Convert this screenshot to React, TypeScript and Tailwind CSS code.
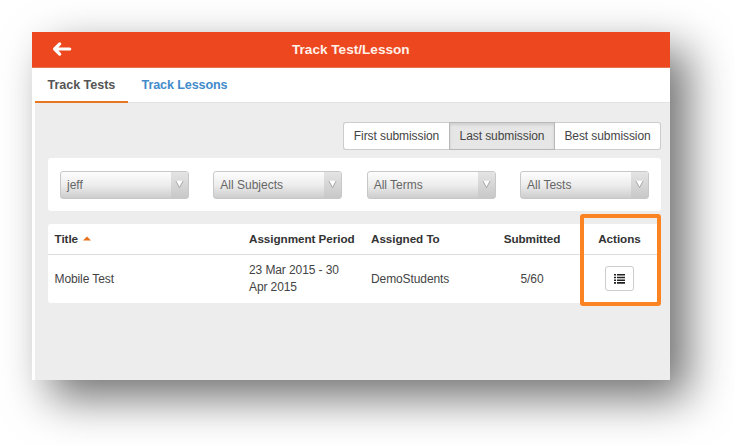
import React from 'react';

function Select({ label }: { label: string }) {
  return (
    <button className="flex h-[28px] w-[129px] overflow-hidden rounded-[3px] border border-[#c8c8c8] bg-gradient-to-b from-[#fdfdfd] via-[#ededed] to-[#cdcdcd] text-left text-[12px] text-[#666]">
      <span className="flex-1 pl-[6px] pt-[4px] leading-[18px]">{label}</span>
      <span className="flex h-full w-[17px] justify-center bg-gradient-to-b from-[#e4e4e4] to-[#c8c8c8] pt-[8px]">
        <svg width="9" height="9" viewBox="0 0 9 9">
          <path d="M1 .8H8L4.5 7.2Z" fill="#fff" />
          <path d="M.9 1L4.5 7.6L8.1 1" fill="none" stroke="#999" strokeWidth=".8" />
        </svg>
      </span>
    </button>
  );
}

export default function App() {
  return (
    <div className="h-[445px] w-[735px] overflow-hidden bg-white p-8 font-['Liberation_Sans',Arial,sans-serif] text-[#444]">
      <main className="h-[348px] w-[638px] bg-[#ededed] shadow-[18px_18px_42px_rgba(0,0,0,0.56)]">
        <header className="flex h-[36px] items-center border-b border-[#e87355] bg-[#ed4720] text-white">
          <svg className="ml-[20px] mt-[-2px]" width="20" height="16" viewBox="0 0 20 16">
            <path d="M17.7 8H3M7.7 2.9L2.6 8L7.7 13.1" fill="none" stroke="#fff" strokeWidth="3.2" strokeLinecap="round" strokeLinejoin="round" />
          </svg>
          <h1 className="ml-[220px] whitespace-nowrap text-[13.6px] font-bold leading-[18px] text-[#fff1e8]">Track Test/Lesson</h1>
        </header>
        <div className="h-[312px] border-l-[3px] border-white">
          <nav className="flex h-[35px] border-b border-[#e2e2e2] bg-white text-[12.6px] font-bold">
            <a className="h-[35px] w-[93px] whitespace-nowrap border-b-2 border-[#e87722] pl-[12.5px] pt-[8px] leading-[18px] tracking-[-0.05px] text-[#555]">Track Tests</a>
            <a className="whitespace-nowrap pl-[13.5px] pt-[8px] leading-[18px] tracking-[-0.12px] text-[#428bca]">Track Lessons</a>
          </nav>
          <div className="pl-[13px] pr-[9px] pt-[19px]">
            <div className="flex justify-end text-[12px] leading-[26px] tracking-[-0.08px]">
              <button className="h-[28px] w-[106px] whitespace-nowrap rounded-l-[3px] border border-r-0 border-[#ccc] bg-white">First submission</button>
              <button className="h-[28px] w-[106px] whitespace-nowrap border border-[#b8b8b8] bg-[#e6e6e6] shadow-[inset_0_2px_3px_rgba(0,0,0,0.1)]">Last submission</button>
              <button className="h-[28px] w-[106px] whitespace-nowrap rounded-r-[3px] border border-l-0 border-[#ccc] bg-white">Best submission</button>
            </div>
            <section className="mt-[8px] flex h-[53px] items-center justify-between rounded-[3px] bg-white pl-[12px] pr-[12px]">
              <Select label="jeff" />
              <Select label="All Subjects" />
              <Select label="All Terms" />
              <Select label="All Tests" />
            </section>
            <section className="relative mt-[13px] rounded-[3px] bg-white text-[12px] tracking-[-0.1px]">
              <div className="grid h-[31px] grid-cols-[201px_122px_117px_88px_85px] border-b border-[#ddd] pt-[6px] text-[11.7px] font-bold leading-[18px] tracking-[-0.05px] text-[#333]">
                <div className="flex h-[18px] items-center pl-[6.5px]">
                  Title
                  <svg className="ml-[5px] mt-[-1px]" width="8" height="5" viewBox="0 0 8 5"><path d="M0 4.5L4 .5L8 4.5Z" fill="#e8701a" /></svg>
                </div>
                <div className="whitespace-nowrap">Assignment Period</div>
                <div>Assigned To</div>
                <div className="text-center">Submitted</div>
                <div className="pl-[2px] text-center">Actions</div>
              </div>
              <div className="grid h-[48px] grid-cols-[201px_122px_117px_88px_85px] items-center leading-[17px]">
                <div className="pl-[6.5px]">Mobile Test</div>
                <div>23 Mar 2015 - 30<br />Apr 2015</div>
                <div>DemoStudents</div>
                <div className="text-center">5/60</div>
                <div className="flex justify-center pb-px pl-[2px]">
                  <button className="flex h-[25px] w-[29px] items-center justify-center rounded-[3px] border border-[#ccc] bg-white">
                    <svg width="11" height="10" viewBox="0 0 11 10" fill="#222">
                      <path d="M0 0H2V1.6H0ZM3 0H11V1.6H3ZM0 2.7H2V4.3H0ZM3 2.7H11V4.3H3ZM0 5.4H2V7H0ZM3 5.4H11V7H3ZM0 8.1H2V9.7H0ZM3 8.1H11V9.7H3Z" />
                    </svg>
                  </button>
                </div>
              </div>
              <div className="pointer-events-none absolute left-[532px] top-[-10px] h-[92px] w-[81px] rounded-[3px] border-4 border-[#fb8322]" />
            </section>
          </div>
        </div>
      </main>
    </div>
  );
}
